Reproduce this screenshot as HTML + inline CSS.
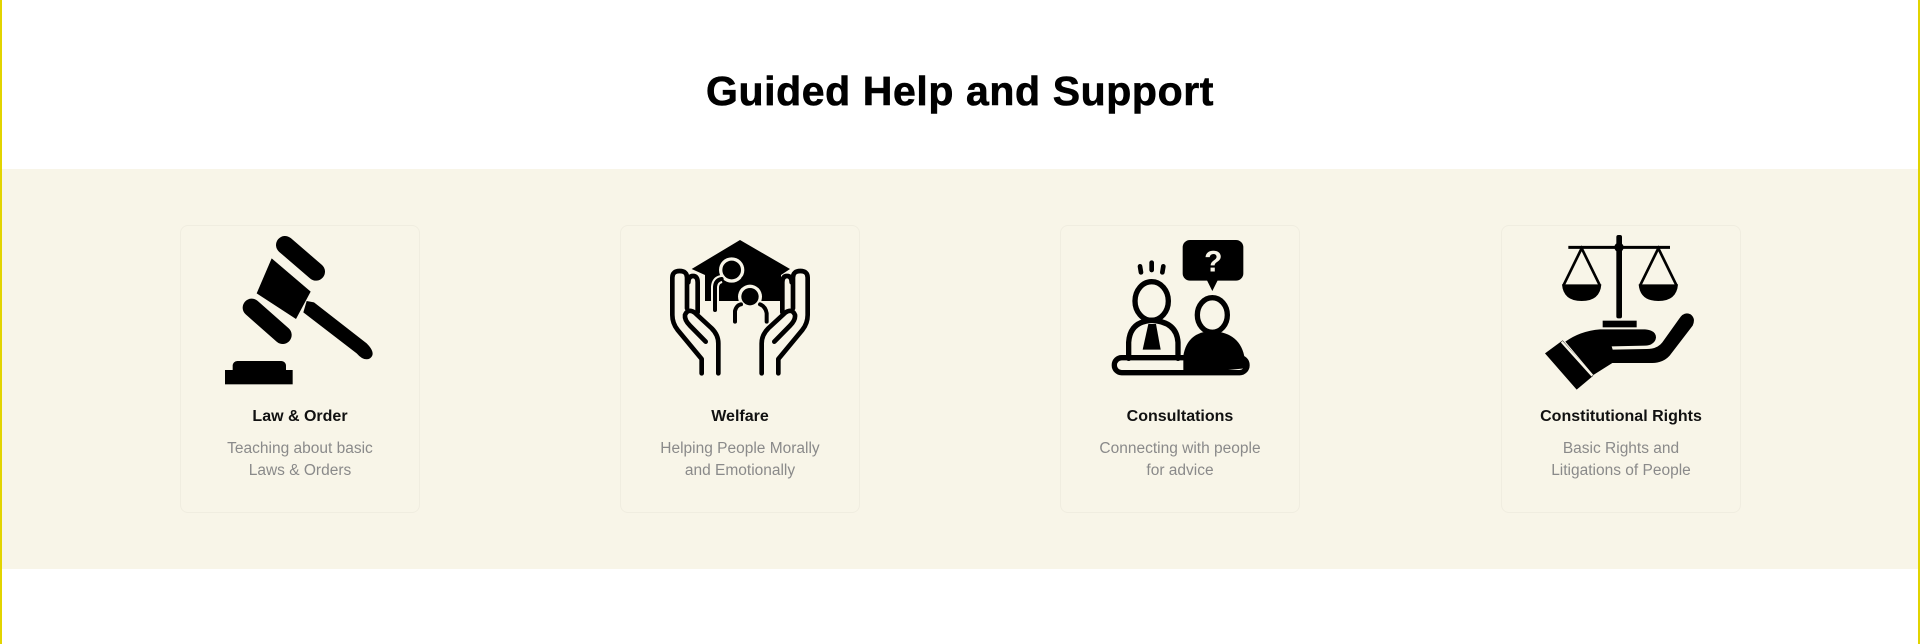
<!DOCTYPE html>
<html><head><meta charset="utf-8"><style>
html,body{margin:0;padding:0;}
body{width:1920px;height:644px;position:relative;background:#fff;overflow:hidden;font-family:"Liberation Sans",sans-serif;}
.bl{position:absolute;left:0;top:0;width:2px;height:644px;background:#e2d400;}
.br{position:absolute;right:0;top:0;width:2px;height:644px;background:#e2d400;}
h1{position:absolute;left:0;width:1920px;top:67px;margin:0;text-align:center;font-size:41px;line-height:48px;font-weight:bold;color:#000;letter-spacing:0.6px;-webkit-text-stroke:0.6px #000;}
.band{position:absolute;left:2px;right:2px;top:169px;height:400px;background:#f8f5e8;}
.card{position:absolute;top:225px;width:238px;height:286px;border:1px solid #f0ede0;border-radius:8px;}
.t{position:absolute;top:405px;width:240px;text-align:center;font-size:16px;font-weight:bold;color:#111;line-height:24px;}
.d{position:absolute;top:438px;width:240px;text-align:center;font-size:15.5px;color:#8a8a8a;line-height:22px;}
svg{position:absolute;}
</style></head><body>
<div class="bl"></div><div class="br"></div>
<h1>Guided Help and Support</h1>
<div class="band"></div>
<div class="card" style="left:180px"></div>
<div class="card" style="left:620px"></div>
<div class="card" style="left:1060px"></div>
<div class="card" style="left:1501px"></div>

<!-- gavel -->
<svg style="left:210px;top:225px" width="180" height="170" viewBox="0 0 540 510">
<line x1="225" y1="60" x2="318" y2="140" stroke="#000" stroke-width="54" stroke-linecap="round"/>
<polygon points="185,100 302,200 258,282 140,205" fill="#000"/>
<line x1="125" y1="248" x2="218" y2="330" stroke="#000" stroke-width="54" stroke-linecap="round"/>
<path d="M290,228 L312,232 L470,355 Q500,385 480,400 Q462,410 440,385 L280,262 Z" fill="#000"/>
<rect x="68" y="408" width="160" height="40" rx="14" fill="#000"/>
<rect x="45" y="435" width="203" height="43" fill="#000"/>
</svg>

<!-- welfare -->
<svg style="left:655px;top:225px" width="170" height="160" viewBox="0 0 510 480">
<path d="M110,132 L255,45 L405,132 L378,150 L378,228 L150,228 L150,150 Z" fill="#000"/>
<circle cx="230" cy="135" r="38" fill="#f8f5e8"/>
<circle cx="230" cy="135" r="28" fill="#000"/>
<path d="M180,255 L180,185 Q182,165 200,162" stroke="#f8f5e8" stroke-width="24" fill="none"/>
<path d="M180,255 L180,185 Q182,165 200,162 M265,160 Q280,170 285,185" stroke="#000" stroke-width="12" fill="none" stroke-linecap="round"/>
<circle cx="285" cy="215" r="36" fill="#f8f5e8"/>
<circle cx="285" cy="215" r="26" fill="#000"/>
<path d="M240,290 L240,258 Q245,240 258,238 M315,238 Q332,245 335,265 L335,290" stroke="#f8f5e8" stroke-width="24" fill="none"/>
<path d="M240,290 L240,258 Q245,240 258,238 M315,238 Q332,245 335,265 L335,290" stroke="#000" stroke-width="12" fill="none" stroke-linecap="round"/>
<g fill="none" stroke="#000" stroke-width="14" stroke-linecap="round" stroke-linejoin="round">
<path d="M140,445 L140,402 L68,315 Q52,295 52,270 L52,158 Q52,138 74,138 Q96,138 96,158 L96,250"/>
<path d="M100,172 Q100,153 114,153 Q128,153 128,172 L128,262"/>
<path d="M190,445 L190,355 Q190,330 170,310 L118,262 Q98,250 90,270 Q88,285 105,302 L152,350"/>
</g>
<g transform="translate(510,0) scale(-1,1)" fill="none" stroke="#000" stroke-width="14" stroke-linecap="round" stroke-linejoin="round">
<path d="M140,445 L140,402 L68,315 Q52,295 52,270 L52,158 Q52,138 74,138 Q96,138 96,158 L96,250"/>
<path d="M100,172 Q100,153 114,153 Q128,153 128,172 L128,262"/>
<path d="M190,445 L190,355 Q190,330 170,310 L118,262 Q98,250 90,270 Q88,285 105,302 L152,350"/>
</g>
</svg>

<!-- consultations -->
<svg style="left:1100px;top:225px" width="160" height="160" viewBox="0 0 480 480">
<rect x="248" y="45" width="182" height="122" rx="22" fill="#000"/>
<polygon points="318,160 356,160 337,198" fill="#000"/>
<text x="340" y="140" font-family="Liberation Sans,sans-serif" font-size="90" font-weight="bold" fill="#f8f5e8" text-anchor="middle">?</text>
<g stroke="#000" stroke-width="14" stroke-linecap="round" fill="none">
<line x1="120" y1="124" x2="123" y2="142"/>
<line x1="155" y1="113" x2="155" y2="135"/>
<line x1="190" y1="124" x2="187" y2="142"/>
<ellipse cx="155" cy="228" rx="50" ry="58" stroke-width="16"/>
<path d="M86,400 L86,352 Q90,290 155,286 Q230,290 234,352 L234,400" stroke-width="16"/>
<rect x="43" y="398" width="398" height="45" rx="22" stroke-width="16"/>
<ellipse cx="337" cy="270" rx="45" ry="52" stroke-width="16"/>
</g>
<polygon points="145,297 168,297 182,374 128,374" fill="#000"/>
<path d="M250,448 L250,392 Q262,320 337,318 Q422,323 434,400 L434,430 L250,448 Z" fill="#000"/>
</svg>

<!-- scales -->
<svg style="left:1530px;top:225px" width="180" height="170" viewBox="0 0 540 510">
<rect x="259" y="30" width="17" height="250" rx="6" fill="#000"/>
<circle cx="267" cy="67" r="14" fill="#000"/>
<line x1="115" y1="67" x2="420" y2="67" stroke="#000" stroke-width="9"/>
<g stroke="#000" stroke-width="8" fill="none">
<path d="M100,182 L155,70 L210,182"/>
<path d="M330,182 L385,70 L440,182"/>
</g>
<path d="M96,178 L214,178 Q210,228 155,228 Q100,228 96,178 Z" fill="#000"/>
<path d="M326,178 L444,178 Q440,228 385,228 Q330,228 326,178 Z" fill="#000"/>
<rect x="218" y="287" width="102" height="20" fill="#000"/>
<path d="M106,350 Q150,318 210,313 L345,313 Q378,316 378,338 Q375,360 345,362 L245,364 L248,374 L350,372 Q382,372 397,352 L447,282 Q462,258 482,268 Q498,280 488,302 L419,392 Q399,414 367,414 L247,414 L190,450 Z" fill="#000"/>
<polygon points="45,385 98,346 190,452 140,494" fill="#000"/>
<line x1="95" y1="350" x2="187" y2="452" stroke="#f8f5e8" stroke-width="7"/>
</svg>

<div class="t" style="left:180px">Law &amp; Order</div>
<div class="d" style="left:180px">Teaching about basic<br>Laws &amp; Orders</div>
<div class="t" style="left:620px">Welfare</div>
<div class="d" style="left:620px">Helping People Morally<br>and Emotionally</div>
<div class="t" style="left:1060px">Consultations</div>
<div class="d" style="left:1060px">Connecting with people<br>for advice</div>
<div class="t" style="left:1501px">Constitutional Rights</div>
<div class="d" style="left:1501px">Basic Rights and<br>Litigations of People</div>
</body></html>
